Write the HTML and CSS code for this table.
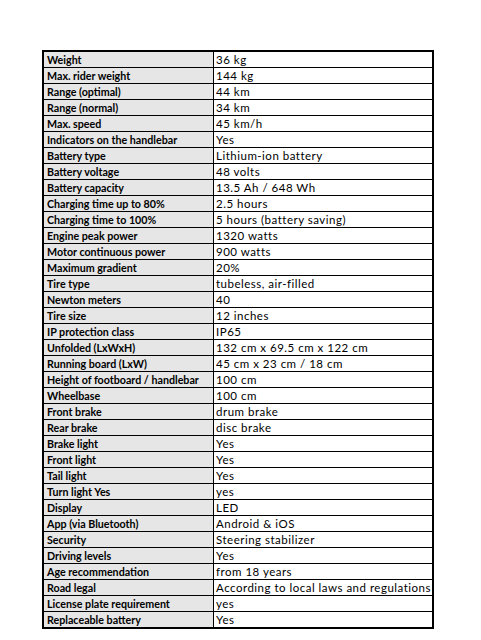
FILE: index.html
```html
<!DOCTYPE html>
<html lang="en">
<head>
<meta charset="utf-8">
<title>Specifications</title>
<link rel="stylesheet" href="styles.css">
</head>
<body>
<div class="sheet">
  <div class="row"><div class="k">Weight</div><div class="v">36 kg</div></div>
  <div class="row"><div class="k">Max. rider weight</div><div class="v">144 kg</div></div>
  <div class="row"><div class="k">Range (optimal)</div><div class="v">44 km</div></div>
  <div class="row"><div class="k">Range (normal)</div><div class="v">34 km</div></div>
  <div class="row"><div class="k">Max. speed</div><div class="v">45 km/h</div></div>
  <div class="row"><div class="k">Indicators on the handlebar</div><div class="v">Yes</div></div>
  <div class="row"><div class="k">Battery type</div><div class="v">Lithium-ion battery</div></div>
  <div class="row"><div class="k">Battery voltage</div><div class="v">48 volts</div></div>
  <div class="row"><div class="k">Battery capacity</div><div class="v">13.5 Ah / 648 Wh</div></div>
  <div class="row"><div class="k">Charging time up to 80%</div><div class="v">2.5 hours</div></div>
  <div class="row"><div class="k">Charging time to 100%</div><div class="v">5 hours (battery saving)</div></div>
  <div class="row"><div class="k">Engine peak power</div><div class="v">1320 watts</div></div>
  <div class="row"><div class="k">Motor continuous power</div><div class="v">900 watts</div></div>
  <div class="row"><div class="k">Maximum gradient</div><div class="v">20%</div></div>
  <div class="row"><div class="k">Tire type</div><div class="v">tubeless, air-filled</div></div>
  <div class="row"><div class="k">Newton meters</div><div class="v">40</div></div>
  <div class="row"><div class="k">Tire size</div><div class="v">12 inches</div></div>
  <div class="row"><div class="k">IP protection class</div><div class="v">IP65</div></div>
  <div class="row"><div class="k">Unfolded (LxWxH)</div><div class="v">132 cm x 69.5 cm x 122 cm</div></div>
  <div class="row"><div class="k">Running board (LxW)</div><div class="v">45 cm x 23 cm / 18 cm</div></div>
  <div class="row"><div class="k">Height of footboard / handlebar</div><div class="v">100 cm</div></div>
  <div class="row"><div class="k">Wheelbase</div><div class="v">100 cm</div></div>
  <div class="row"><div class="k">Front brake</div><div class="v">drum brake</div></div>
  <div class="row"><div class="k">Rear brake</div><div class="v">disc brake</div></div>
  <div class="row"><div class="k">Brake light</div><div class="v">Yes</div></div>
  <div class="row"><div class="k">Front light</div><div class="v">Yes</div></div>
  <div class="row"><div class="k">Tail light</div><div class="v">Yes</div></div>
  <div class="row"><div class="k">Turn light Yes</div><div class="v">yes</div></div>
  <div class="row"><div class="k">Display</div><div class="v">LED</div></div>
  <div class="row"><div class="k">App (via Bluetooth)</div><div class="v">Android &amp; iOS</div></div>
  <div class="row"><div class="k">Security</div><div class="v">Steering stabilizer</div></div>
  <div class="row"><div class="k">Driving levels</div><div class="v">Yes</div></div>
  <div class="row"><div class="k">Age recommendation</div><div class="v">from 18 years</div></div>
  <div class="row"><div class="k">Road legal</div><div class="v">According to local laws and regulations</div></div>
  <div class="row"><div class="k">License plate requirement</div><div class="v">yes</div></div>
  <div class="row"><div class="k">Replaceable battery</div><div class="v">Yes</div></div>
</div>
</body>
</html>
```
FILE: styles.css
```css
html, body {
  margin: 0;
  padding: 0;
  background: #fff;
}
body {
  padding: 50px 0 0 42px;
  font-family: Lato, "Liberation Sans", sans-serif;
  font-size: 11px;
  color: #000;
}
.sheet {
  display: flex;
  flex-direction: column;
  width: 388px;
  border: 2px solid #000;
}
.row {
  display: grid;
  grid-template-columns: 170px 218px;
  height: 16px;
  border-bottom: 1px solid #000;
  box-sizing: border-box;
}
.row:last-child {
  border-bottom: none;
  height: 15px;
}
.k {
  background: #e6e6e6;
  border-right: 1px solid #000;
  font-size: 10.7px;
  font-weight: 700;
  padding-left: 3px;
  line-height: 15px;
  white-space: nowrap;
  overflow: hidden;
}
.v {
  font-size: 11.5px;
  letter-spacing: 0.5px;
  padding-left: 2px;
  line-height: 15px;
  white-space: nowrap;
  overflow: hidden;
}
```
